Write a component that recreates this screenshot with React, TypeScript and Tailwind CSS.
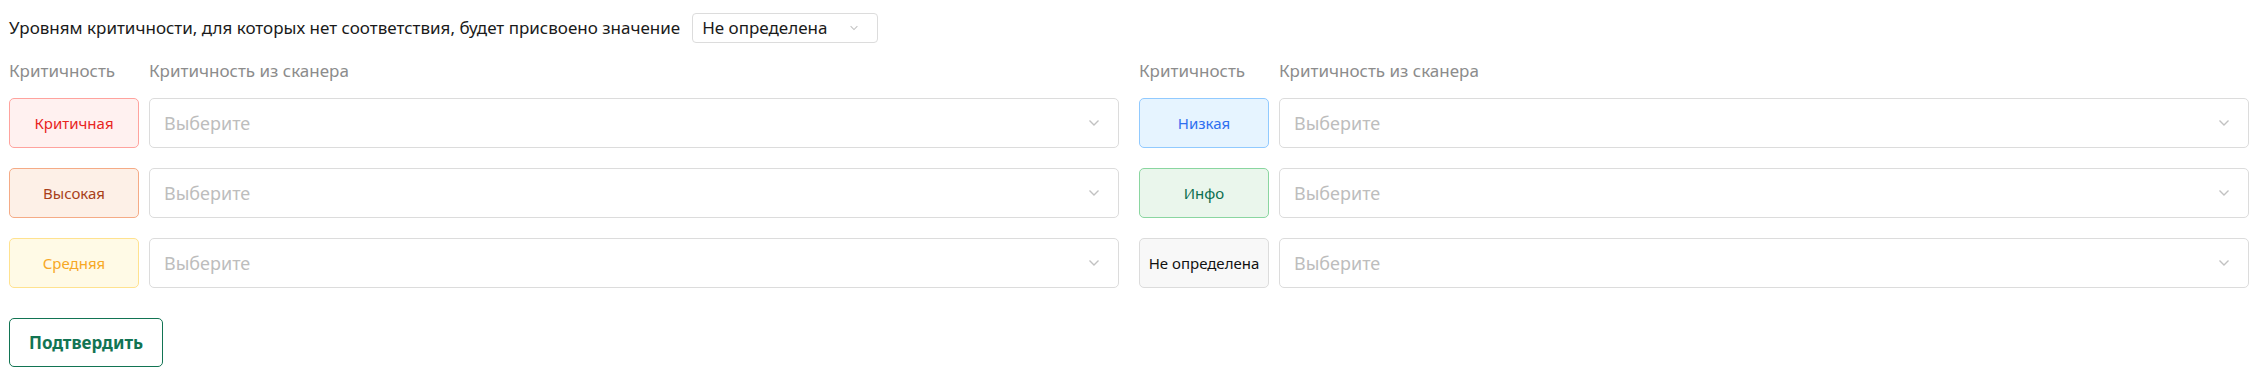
import React from 'react';

type Level = {
  name: string;
  box: string;
};

const LEFT: Level[] = [
  { name: 'Критичная', box: 'bg-[#fff1f0] border-[#ffa39e] text-[#e8251f]' },
  { name: 'Высокая', box: 'bg-[#fdf0e7] border-[#f5ab86] text-[#a8401a]' },
  { name: 'Средняя', box: 'bg-[#fffae6] border-[#ffe28f] text-[#f7a825]' },
];

const RIGHT: Level[] = [
  { name: 'Низкая', box: 'bg-[#e6f4ff] border-[#91caff] text-[#2f6ff0]' },
  { name: 'Инфо', box: 'bg-[#eaf6ec] border-[#8ad6a0] text-[#0b6e4f]' },
  { name: 'Не определена', box: 'bg-[#f8f8f8] border-[#dcdcdc] text-[#111111]' },
];

function Chevron({ className }: { className?: string }) {
  return (
    <svg viewBox="0 0 12 8" className={className} fill="none">
      <path d="M1.5 1.5 6 6l4.5-4.5" stroke="currentColor" strokeWidth="1.4" />
    </svg>
  );
}

function Select({ placeholder }: { placeholder: string }) {
  return (
    <div className="flex h-[50px] flex-1 items-center justify-between rounded-[5px] border border-[#dcdcdc] bg-white pl-[14px] pr-[18px]">
      <span className="text-[18px] text-[#bdbdbd]">{placeholder}</span>
      <Chevron className="h-[8px] w-[12px] text-[#c2c2c2]" />
    </div>
  );
}

function Column({ levels }: { levels: Level[] }) {
  return (
    <div className="flex flex-col">
      <div className="flex h-[24px] items-center text-[17px] text-[#8c8c8c]">
        <div className="w-[140px]">Критичность</div>
        <div>Критичность из сканера</div>
      </div>
      <div className="mt-[15px] flex flex-col gap-[20px]">
        {levels.map((level) => (
          <div key={level.name} className="flex gap-[10px]">
            <div
              className={`flex h-[50px] w-[130px] items-center justify-center rounded-[5px] border text-[15px] ${level.box}`}
            >
              {level.name}
            </div>
            <Select placeholder="Выберите" />
          </div>
        ))}
      </div>
    </div>
  );
}

export default function App() {
  return (
    <div className="h-[381px] bg-white pl-[9px] pr-[14px] pt-[13px] font-['Noto_Sans',sans-serif]">
      <div className="flex h-[30px] items-center gap-[12px] text-[17px] text-[#1a1a1a]">
        <span>Уровням критичности, для которых нет соответствия, будет присвоено значение</span>
        <div className="flex h-[30px] w-[186px] items-center justify-between rounded-[4px] border border-[#dcdcdc] pl-[9px] pr-[18px]">
          <span className="text-[17px] text-[#1a1a1a]">Не определена</span>
          <Chevron className="h-[6px] w-[10px] text-[#c2c2c2]" />
        </div>
      </div>
      <div className="mt-[16px] grid grid-cols-2 gap-[20px]">
        <Column levels={LEFT} />
        <Column levels={RIGHT} />
      </div>
      <button className="mt-[30px] flex h-[49px] w-[154px] items-center justify-center rounded-[5px] border border-[#127453] text-[17px] font-bold text-[#127453]">
        Подтвердить
      </button>
    </div>
  );
}
